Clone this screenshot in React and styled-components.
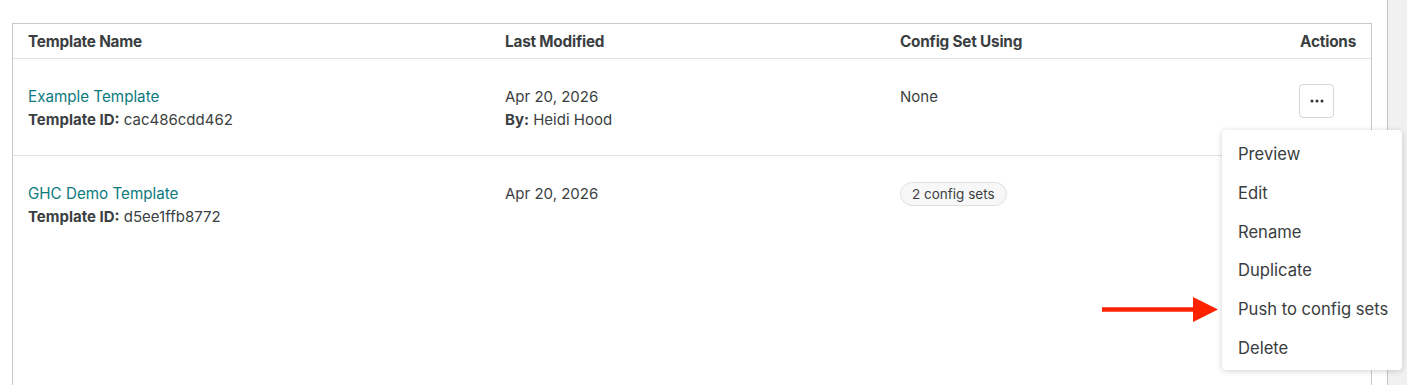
import React from 'react'
import styled, { createGlobalStyle } from 'styled-components'

const GlobalStyle = createGlobalStyle`
  body {
    margin: 0;
    background: #fff;
    font-family: Inter, "Liberation Sans", Arial, sans-serif;
    color: #3b3f42;
  }
`

const templates = [
  {
    name: 'Example Template',
    id: 'cac486cdd462',
    date: 'Apr 20, 2026',
    by: 'Heidi Hood',
    config: null,
    hasButton: true,
  },
  {
    name: 'GHC Demo Template',
    id: 'd5ee1ffb8772',
    date: 'Apr 20, 2026',
    config: '2 config sets',
  },
]

const menuItems = ['Preview', 'Edit', 'Rename', 'Duplicate', 'Push to config sets', 'Delete']

const App = () => {
  return (
    <Page>
      <GlobalStyle />
      <Main>
        <Table>
          <HeaderRow>
            <HeadCell>Template Name</HeadCell>
            <HeadCell>Last Modified</HeadCell>
            <HeadCell>Config Set Using</HeadCell>
            <HeadCell align="right">Actions</HeadCell>
          </HeaderRow>
          {templates.map(t => (
            <Row key={t.id}>
              <Cell>
                <NameLink href="#">{t.name}</NameLink>
                <Line>
                  <b>Template ID:</b> {t.id}
                </Line>
              </Cell>
              <Cell>
                <Line>{t.date}</Line>
                {t.by && (
                  <Line>
                    <b>By:</b> {t.by}
                  </Line>
                )}
              </Cell>
              <Cell>
                {t.config ? <Badge>{t.config}</Badge> : <Line>None</Line>}
              </Cell>
              <ActionCell>
                {t.hasButton && (
                  <DotsButton aria-label="Actions">
                    <svg width="14" height="4" viewBox="0 0 14 4">
                      <circle cx="2" cy="2" r="1.5" fill="#2f3234" />
                      <circle cx="7" cy="2" r="1.5" fill="#2f3234" />
                      <circle cx="12" cy="2" r="1.5" fill="#2f3234" />
                    </svg>
                  </DotsButton>
                )}
              </ActionCell>
            </Row>
          ))}
        </Table>
      </Main>
      <Scrollbar />

      <Menu>
        {menuItems.map(item => (
          <MenuItem key={item}>{item}</MenuItem>
        ))}
      </Menu>

      <Arrow width="120" height="28" viewBox="0 0 120 28">
        <line x1="0" y1="14.5" x2="96" y2="14.5" stroke="#ff2200" strokeWidth="4.5" />
        <polygon points="91,2 116,14.5 91,27" fill="#ff2200" />
      </Arrow>
    </Page>
  )
}

const Page = styled.div`
  position: relative;
  display: flex;
  width: 1407px;
  height: 385px;
  overflow: hidden;
`

const Main = styled.div`
  flex: 1;
  padding: 23px 15px 0 12px;
`

const Scrollbar = styled.div`
  width: 19px;
  background: #f1f1f1;
  border-left: 1px solid #c6c6c6;
`

const Table = styled.div`
  border: 1px solid #c9c9c9;
  min-height: 420px;
`

const HeaderRow = styled.div`
  display: grid;
  grid-template-columns: 477px 395px 1fr 120px;
  height: 34px;
  align-items: center;
  padding: 0 15px 0 15px;
  border-bottom: 1px solid #e2e2e2;
`

const HeadCell = styled.div`
  font-size: 15.3px;
  font-weight: 700;
  color: #3a3e41;
  letter-spacing: -0.2px;
  text-align: ${props => props.align || 'left'};
`

const Row = styled.div`
  display: grid;
  grid-template-columns: 477px 395px 1fr 120px;
  height: 97px;
  padding: 26px 15px 0 15px;
  box-sizing: border-box;
  border-bottom: 1px solid #e2e2e2;
  align-items: start;

  &:last-child {
    border-bottom: none;
  }
`

const Cell = styled.div`
  display: flex;
  flex-direction: column;
  font-size: 15px;
  line-height: 23px;
`

const NameLink = styled.a`
  color: #0b7a7d;
  text-decoration: none;
  font-size: 15.2px;
  line-height: 23px;
`

const Line = styled.div`
  color: #3b3f42;
  b {
    font-weight: 700;
  }
`

const Badge = styled.span`
  align-self: flex-start;
  height: 22px;
  line-height: 22px;
  padding: 0 11px;
  border: 1px solid #e1e1e1;
  border-radius: 12px;
  background: #f7f7f7;
  font-size: 13.5px;
  color: #3b3f42;
`

const ActionCell = styled.div`
  display: flex;
  justify-content: flex-end;
  padding-right: 22px;
`

const DotsButton = styled.button`
  width: 35px;
  height: 34px;
  margin-top: -1px;
  display: flex;
  align-items: center;
  justify-content: center;
  background: #fff;
  border: 1px solid #d6d6d6;
  border-radius: 4px;
  padding: 0;
`

const Menu = styled.div`
  position: absolute;
  left: 1222px;
  top: 130px;
  width: 180px;
  padding: 5px 0 2px;
  background: #fff;
  border-radius: 4px;
  box-shadow: 0 1px 6px rgba(0, 0, 0, 0.18);
`

const MenuItem = styled.div`
  height: 38.8px;
  line-height: 38.8px;
  padding-left: 16px;
  font-size: 16.6px;
  color: #3a3d40;
  white-space: nowrap;
`

const Arrow = styled.svg`
  position: absolute;
  left: 1102px;
  top: 295px;
`

export default App
